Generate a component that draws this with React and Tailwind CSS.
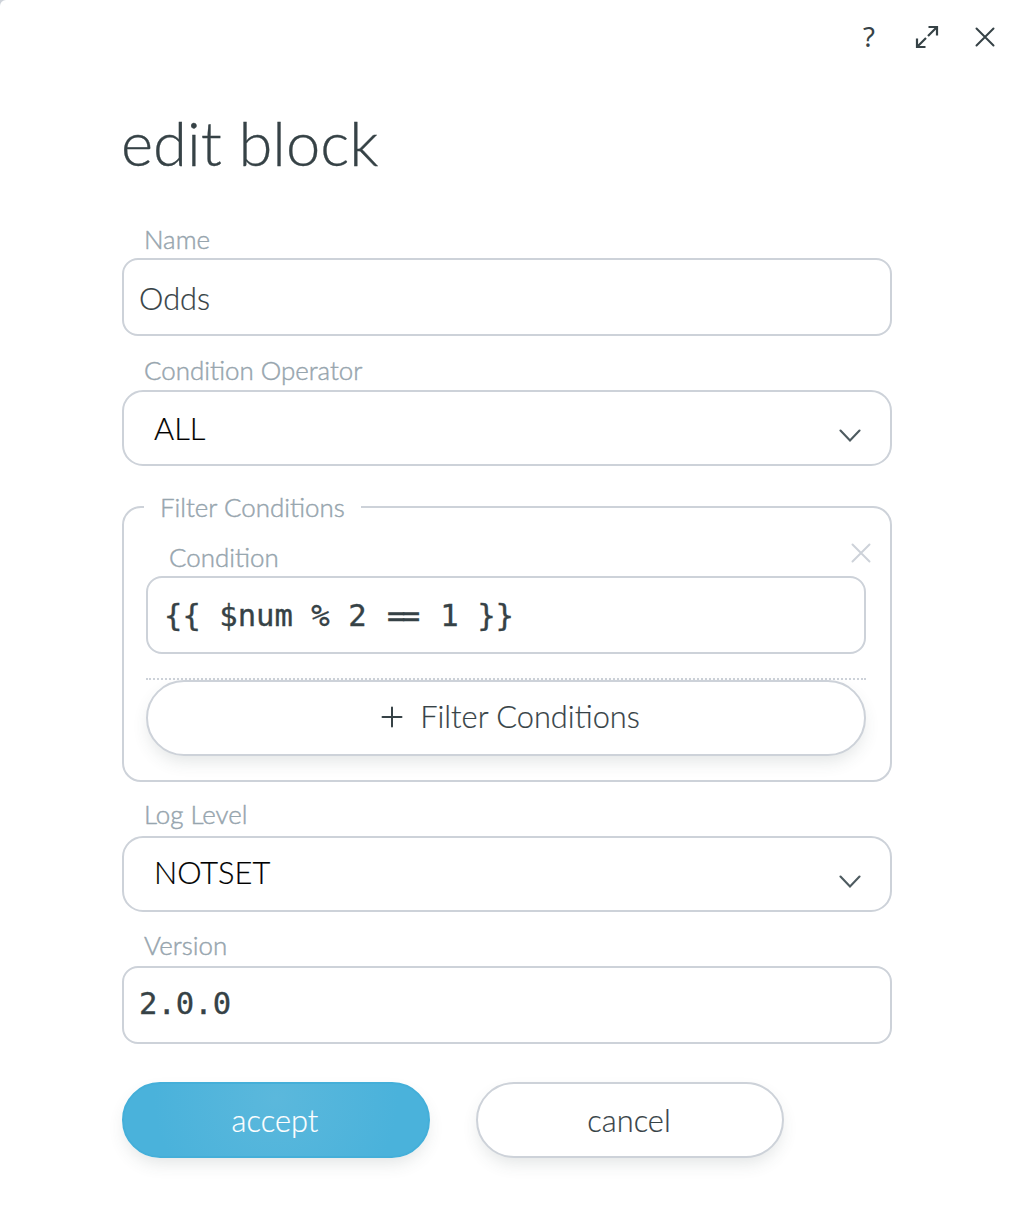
const labelText =
  "whitespace-nowrap text-[25.9px] leading-[32px] font-light text-[#97a5ae] [-webkit-text-stroke:0.45px_#97a5ae]";
const bodyText = "text-[30.8px] leading-[40px] font-light [-webkit-text-stroke:0.2px_currentColor]";
const monoText =
  "whitespace-pre font-['DejaVu_Sans_Mono',monospace] text-[30.6px] leading-[40px] [-webkit-text-stroke:0.35px_currentColor]";
const inputBox = "flex h-[78px] items-center rounded-[16px] border-2 border-[#cdd2d9] bg-white";
const pillShadow = "shadow-[0_8px_18px_-4px_rgba(54,73,73,0.16)]";

function Cross({ className }) {
  return (
    <svg className={className} width="20" height="20" viewBox="0 0 20 20" fill="none" stroke="currentColor" strokeWidth="2" strokeLinecap="round">
      <path d="M1.5 1.5L18.5 18.5M18.5 1.5L1.5 18.5" />
    </svg>
  );
}

function Select({ value, className }) {
  return (
    <div className="flex h-[76px] items-center justify-between rounded-[21px] border-2 border-[#cdd2d9] bg-white pr-[29px] pl-[30px]">
      <span className={bodyText + " text-black " + className}>{value}</span>
      <svg className="mt-[14px]" width="22" height="14" viewBox="0 0 22 14" fill="none" stroke="#4e5b60" strokeWidth="2.1" strokeLinecap="round">
        <path d="M1.5 2.5L11 12.5L20.5 2.5" />
      </svg>
    </div>
  );
}

export default function App() {
  return (
    <div className="bg-[#cdd2d9]">
      <div className="h-[1216px] w-[1010px] overflow-hidden rounded-tl-[6px] bg-white font-['Lato',sans-serif] text-[#364246]">
        <header className="flex h-[74px] items-center justify-end pr-[15px]">
          <span className="w-[12px] text-center font-['Noto_Sans',sans-serif] text-[27.5px] leading-[32px]">?</span>
          <svg className="ml-[40px]" width="24" height="24" viewBox="0 0 24 24" fill="none" stroke="currentColor" strokeWidth="2.2">
            <path d="M2 13.5V22H10.5M2 22L11 13M13.5 2H22V10.5M22 2L13 11" />
          </svg>
          <Cross className="ml-[36px]" />
        </header>

        <main className="ml-[122px] w-[770px]">
          <h1 className="-ml-px h-[149px] pt-[32px] text-[61.5px] leading-[72px] font-light [-webkit-text-stroke:0.3px_currentColor]">
            edit block
          </h1>

          <div className={labelText + " h-[35px] pl-[22px]"}>Name</div>
          <div className={inputBox + " pt-[3px] pl-[15px]"}>
            <span className={bodyText}>Odds</span>
          </div>

          <div className={labelText + " mt-[18px] h-[36px] pl-[22px]"}>Condition Operator</div>
          <Select value="ALL" className="pt-[1px]" />

          <fieldset className="mt-[25px] h-[291px] rounded-[19px] border-2 border-[#cdd2d9] pr-[24px] pl-[22px]">
            <legend className={labelText + " -ml-[2px] px-[16px]"}>Filter Conditions</legend>
            <div className="mt-[18px] flex h-[35px] justify-between pl-[23px]">
              <span className={labelText}>Condition</span>
              <Cross className="-mr-[5px] mt-[2px] text-[#cdd2d9]" />
            </div>
            <div className={inputBox + " pt-[1px] pl-[16px]"}>
              <span className={monoText}>
                {"{{ $num % 2 "}
                <span className="ml-[2px] tracking-[-2.6px]">=</span>
                <span className="-ml-px tracking-[1.6px]">=</span>
                {" 1 }}"}
              </span>
            </div>
            <div className="mt-6 border-t-2 border-dotted border-[#cdd2d9]" />
            <button className={"flex h-[76px] w-full items-center justify-center rounded-full border-2 border-[#cdd2d9] bg-white pb-[2px] pl-[9px] " + pillShadow}>
              <svg className="mr-[17px]" width="22" height="22" viewBox="0 0 22 22" fill="none" stroke="currentColor" strokeWidth="2" strokeLinecap="round">
                <path d="M11 1.5V20.5M1.5 11H20.5" />
              </svg>
              <span className={bodyText}>Filter Conditions</span>
            </button>
          </fieldset>

          <div className={labelText + " mt-[16px] h-[38px] pl-[22px]"}>Log Level</div>
          <Select value="NOTSET" className="pb-[3px]" />

          <div className={labelText + " mt-[17px] h-[37px] pl-[22px]"}>Version</div>
          <div className={inputBox + " pb-[2px] pl-[15px]"}>
            <span className={monoText}>2.0.0</span>
          </div>

          <div className="mt-[38px] flex gap-[46px]">
            <button className={"h-[76px] w-[308px] rounded-full border-2 border-[#44afd9] bg-[radial-gradient(circle_at_50%_20%,#5bb8dc_0%,#4ab2db_75%)] pt-[2px] pr-[2px] text-white " + bodyText + " " + pillShadow}>
              accept
            </button>
            <button className={"h-[76px] w-[308px] rounded-full border-2 border-[#cdd2d9] bg-white pt-[2px] pr-[2px] " + bodyText + " " + pillShadow}>
              cancel
            </button>
          </div>
        </main>
      </div>
    </div>
  );
}
